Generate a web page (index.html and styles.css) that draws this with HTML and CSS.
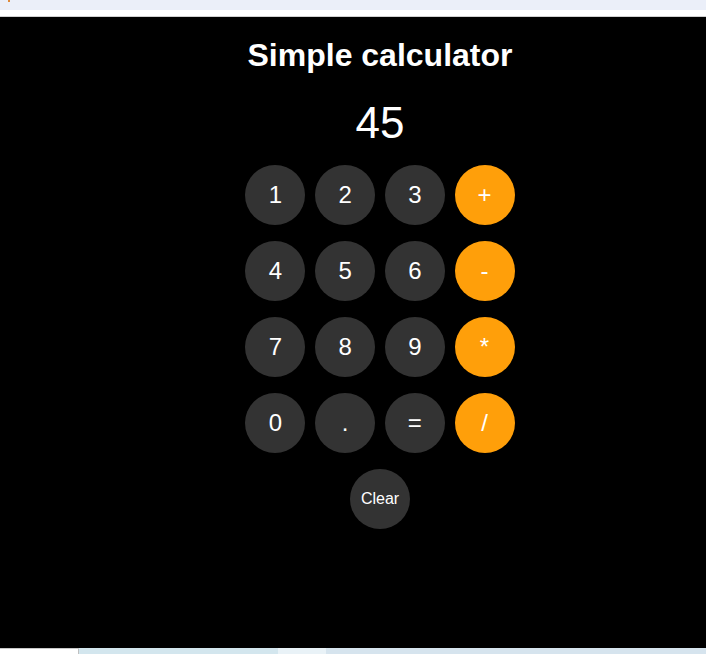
FILE: index.html
```html
<!DOCTYPE html>
<html lang="en">
<head>
<meta charset="utf-8">
<title>Simple calculator</title>
<link rel="stylesheet" href="styles.css">
</head>
<body>
<div class="chrome-top">
  <div class="tab-strip"><span class="tab-dot"></span></div>
  <div class="addr-strip"></div>
</div>
<main class="app">
  <h1 class="title">Simple calculator</h1>
  <div class="display">45</div>
  <div class="keys">
    <button class="key">1</button>
    <button class="key">2</button>
    <button class="key">3</button>
    <button class="key op">+</button>
    <button class="key">4</button>
    <button class="key">5</button>
    <button class="key">6</button>
    <button class="key op">-</button>
    <button class="key">7</button>
    <button class="key">8</button>
    <button class="key">9</button>
    <button class="key op">*</button>
    <button class="key">0</button>
    <button class="key">.</button>
    <button class="key">=</button>
    <button class="key op">/</button>
  </div>
  <button class="key clear">Clear</button>
</main>
<div class="taskbar">
  <div class="seg seg-white"></div>
  <div class="seg seg-blue1"></div>
  <div class="seg seg-light"></div>
  <div class="seg seg-blue2"></div>
</div>
</body>
</html>
```
FILE: styles.css
```css
html, body {
  margin: 0;
  padding: 0;
  background: #000;
  overflow: hidden;
}
body {
  font-family: "Liberation Sans", Arial, sans-serif;
  width: 706px;
  height: 654px;
}
.chrome-top {
  height: 17px;
  display: flex;
  flex-direction: column;
}
.tab-strip {
  height: 10px;
  background: #ebeff9;
  position: relative;
}
.tab-dot {
  position: absolute;
  left: 8px;
  top: 0;
  width: 2px;
  height: 2px;
  background: #e08a3a;
}
.addr-strip {
  height: 6px;
  background: #fff;
  border-bottom: 1px solid #d0d0d0;
}
.app {
  height: 631px;
  box-sizing: border-box;
  background: #000;
  color: #fff;
  display: flex;
  flex-direction: column;
  align-items: center;
  padding-left: 54px;
}
.title {
  margin: 20px 0 0;
  font-size: 32px;
  font-weight: bold;
  line-height: 37px;
}
.display {
  margin-top: 24px;
  font-size: 44px;
  line-height: 49px;
}
.keys {
  margin-top: 18px;
  display: grid;
  grid-template-columns: repeat(4, 60px);
  column-gap: 9.7px;
  row-gap: 16px;
}
.key {
  width: 60px;
  height: 60px;
  border: none;
  border-radius: 50%;
  background: #333;
  color: #fff;
  font-family: "Liberation Sans", Arial, sans-serif;
  font-size: 24px;
  padding: 0;
  display: flex;
  align-items: center;
  justify-content: center;
}
.op {
  background: #ff9f0a;
}
.clear {
  margin-top: 16px;
  font-size: 16px;
}
.taskbar {
  height: 6px;
  display: flex;
}
.seg { height: 100%; }
.seg-white {
  width: 79px;
  background: #fff;
  border-top: 1px solid #c8c8c8;
  border-right: 1px solid #c0c0c0;
  box-sizing: border-box;
}
.seg-blue1 { width: 199px; background: #d3e6ee; }
.seg-light { width: 48px; background: #e9f2f7; }
.seg-blue2 { flex: 1; background: #d6e4ee; }
```
